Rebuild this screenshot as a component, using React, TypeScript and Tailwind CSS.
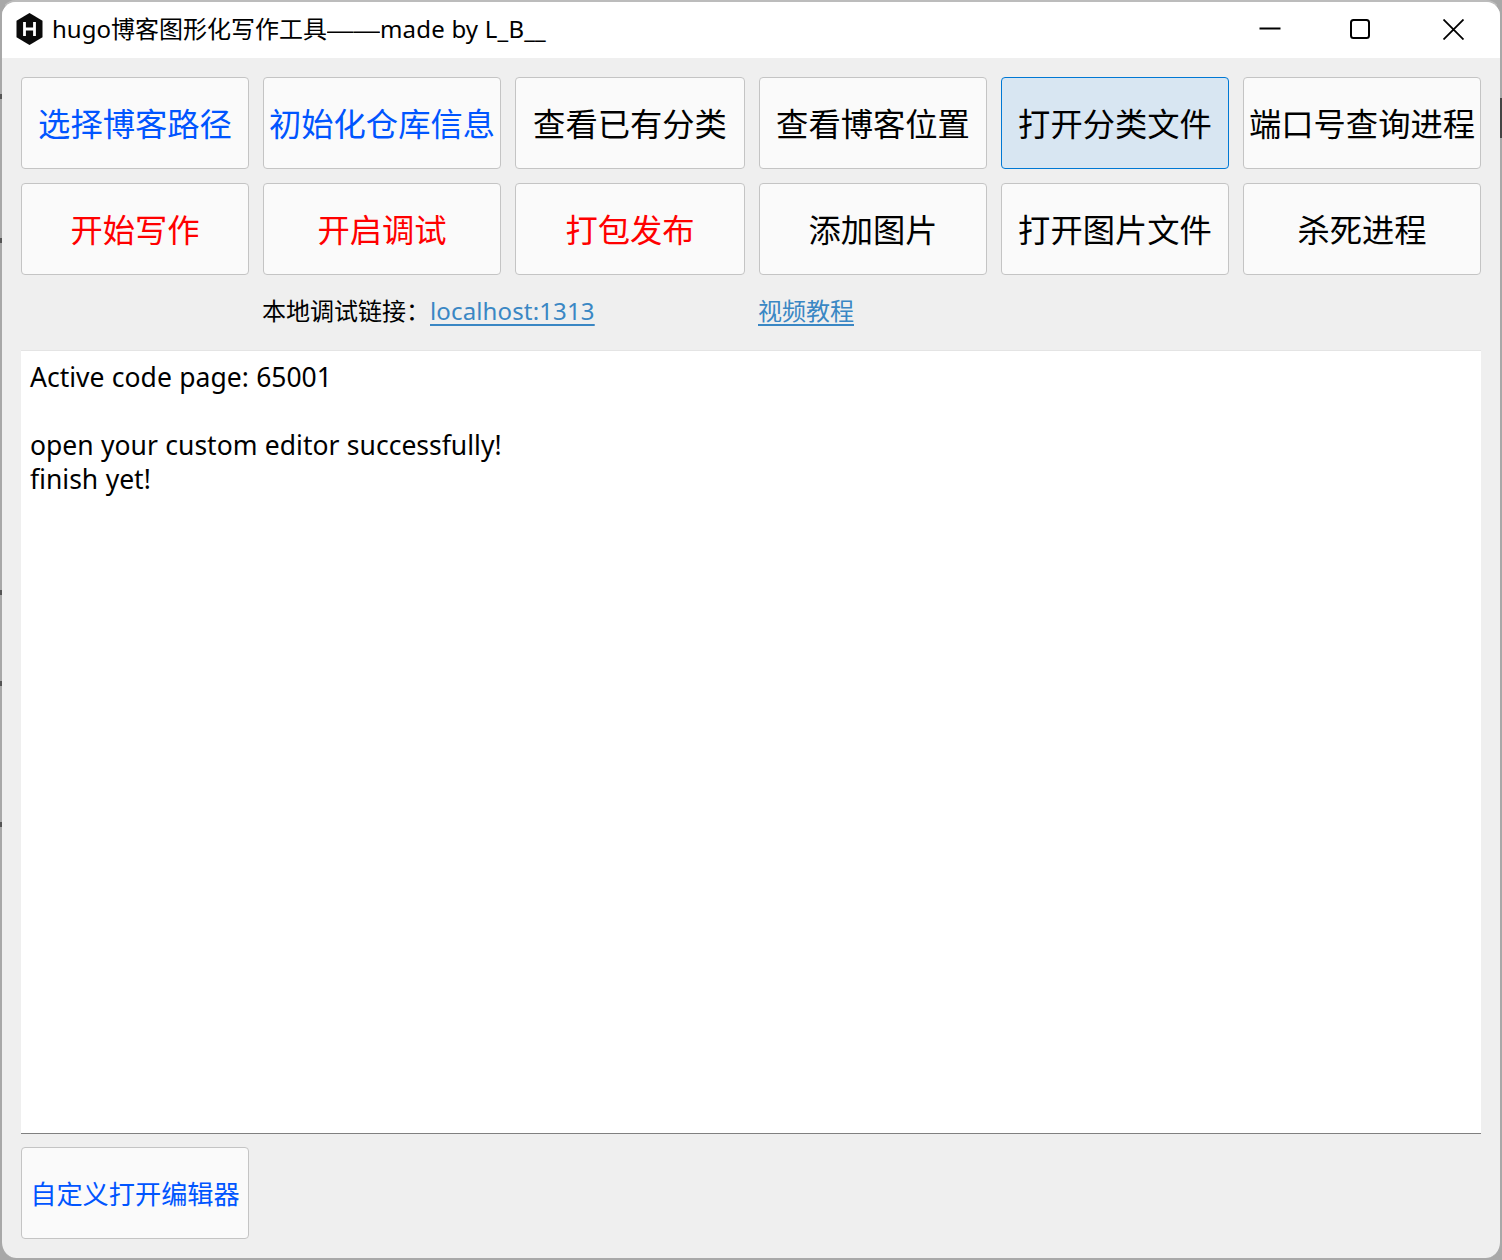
const cols = 'grid grid-cols-[228px_238px_230px_228px_228px_238px] gap-x-[14px]';
const cjk = "font-['Noto_Sans','Noto_Sans_CJK_SC',sans-serif]";

interface Btn {
  label: string;
  color?: string;
  active?: boolean;
}

const rowOne: Btn[] = [
  { label: '选择博客路径', color: 'text-[#0055ff]' },
  { label: '初始化仓库信息', color: 'text-[#0055ff]' },
  { label: '查看已有分类' },
  { label: '查看博客位置' },
  { label: '打开分类文件', active: true },
  { label: '端口号查询进程' },
];

const rowTwo: Btn[] = [
  { label: '开始写作', color: 'text-[#ff0000]' },
  { label: '开启调试', color: 'text-[#ff0000]' },
  { label: '打包发布', color: 'text-[#ff0000]' },
  { label: '添加图片' },
  { label: '打开图片文件' },
  { label: '杀死进程' },
];

function ToolButton({ label, color, active }: Btn) {
  return (
    <button
      className={`h-[92px] rounded-[4px] border text-[32.3px] leading-none whitespace-nowrap ${
        active ? 'border-[#0078d4] bg-[#d8e6f2]' : 'border-[#c4c4c4] bg-[#fafafa]'
      } ${color ?? 'text-black'}`}
    >
      {label}
    </button>
  );
}

function HugoLogo() {
  return (
    <svg width="27" height="32" viewBox="0 0 27 32" className="-mt-[3px]">
      <path d="M13.5 0 L26.5 7.7 V24.3 L13.5 32 L0.5 24.3 V7.7 Z" fill="#0a0a0a" />
      <path d="M8.5 9 V23 M18.5 9 V23 M8.5 16 H18.5" stroke="#fff" strokeWidth="2.8" fill="none" />
    </svg>
  );
}

function WindowControls() {
  return (
    <div className="ml-auto flex items-center pr-[36px] pb-[2px] text-black">
      <svg width="22" height="22" viewBox="0 0 22 22" className="mr-[69px]">
        <path d="M0.5 10.5 H21.5" stroke="currentColor" strokeWidth="2" />
      </svg>
      <svg width="20" height="20" viewBox="0 0 20 20" className="mr-[73px]">
        <rect x="1" y="1" width="18" height="18" rx="2.5" stroke="currentColor" strokeWidth="2" fill="none" />
      </svg>
      <svg width="21" height="21" viewBox="0 0 21 21">
        <path d="M0.5 0.5 L20.5 20.5 M20.5 0.5 L0.5 20.5" stroke="currentColor" strokeWidth="1.8" fill="none" />
      </svg>
    </div>
  );
}

export default function App() {
  return (
    <div className={`relative h-[1260px] w-[1502px] bg-[#a8a8a8] ${cjk}`}>
      <div className="flex h-[1258px] w-[1502px] flex-col overflow-hidden rounded-[16px] border-x-2 border-t-2 border-x-[#a8a8a8] border-t-[#bcbcbc] bg-[#efefef]">
        <div className="flex h-[56px] shrink-0 items-center bg-white pl-[14px]">
          <HugoLogo />
          <span className="-mt-[2px] ml-[9px] text-[24px] leading-none whitespace-nowrap text-black">
            hugo博客图形化写作工具
            <span className="inline-block w-[53px] origin-left scale-x-[1.1] font-['Liberation_Sans',sans-serif]">——</span>
            <span className="tracking-[0.2px]">made by L_B__</span>
          </span>
          <WindowControls />
        </div>
        <div className="flex flex-1 flex-col px-[19px] pt-[19px]">
          <div className={`${cols} gap-y-[14px]`}>
            {rowOne.map((b) => (
              <ToolButton key={b.label} {...b} />
            ))}
            {rowTwo.map((b) => (
              <ToolButton key={b.label} {...b} />
            ))}
          </div>
          <div className={`${cols} h-[75px] items-center text-[24px] leading-none`}>
            <div className="col-span-2 col-start-2 -ml-[1px] pb-[3px] whitespace-nowrap text-black">
              本地调试链接：
              <span className="tracking-[0.14px] text-[#3a87c4] underline underline-offset-4">localhost:1313</span>
            </div>
            <span className="-ml-[1px] pb-[3px] whitespace-nowrap text-[#3a87c4] underline underline-offset-4">
              视频教程
            </span>
          </div>
          <div className="h-[784px] w-[1460px] border-t border-b border-t-[#e4e4e4] border-b-[#808080] bg-white px-[9px] pt-[9px] text-[26.5px] leading-[34px] [word-spacing:0.5px] text-black">
            <div>Active code page: 65001</div>
            <div className="h-[34px]" />
            <div>open your custom editor successfully!</div>
            <div>finish yet!</div>
          </div>
          <button className="mt-[13px] h-[92px] w-[228px] rounded-[4px] border border-[#c4c4c4] bg-[#fafafa] pt-[2px] text-[26.2px] leading-none whitespace-nowrap text-[#0055ff]">
            自定义打开编辑器
          </button>
        </div>
      </div>
      <i className="absolute top-[94px] left-0 h-[5px] w-[2px] bg-[#555]" />
      <i className="absolute top-[238px] left-0 h-[5px] w-[2px] bg-[#555]" />
      <i className="absolute top-[590px] left-0 h-[5px] w-[2px] bg-[#555]" />
      <i className="absolute top-[681px] left-0 h-[5px] w-[2px] bg-[#555]" />
      <i className="absolute top-[822px] left-0 h-[5px] w-[2px] bg-[#555]" />
      <i className="absolute top-[98px] right-0 h-[40px] w-[2px] bg-[#444]" />
    </div>
  );
}
